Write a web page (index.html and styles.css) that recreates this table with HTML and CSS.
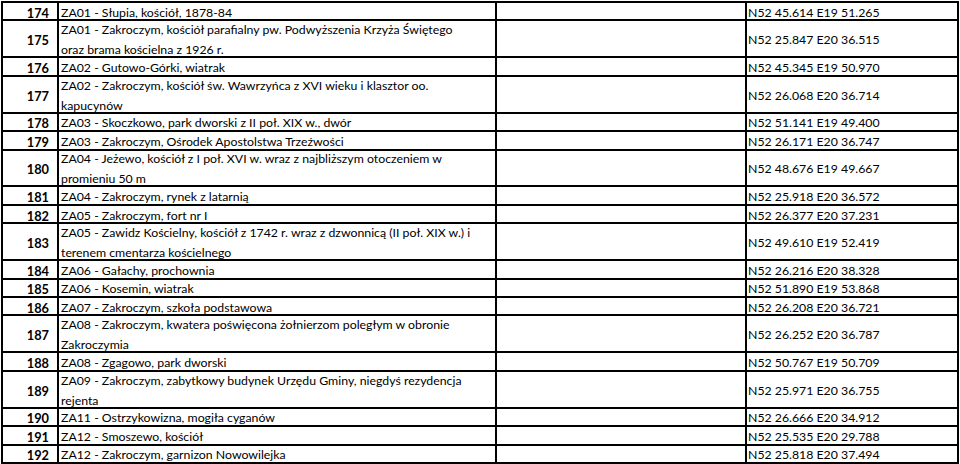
FILE: index.html
```html
<!DOCTYPE html>
<html lang="pl">
<head>
<meta charset="utf-8">
<title>Zabytki</title>
<link rel="stylesheet" href="styles.css">
</head>
<body>
<div class="sheet">
  <div class="row single"><div class="c num">174</div><div class="c name">ZA01 - Słupia, kościół, 1878-84</div><div class="c blank"></div><div class="c coord">N52 45.614 E19 51.265</div></div>
  <div class="row double"><div class="c num">175</div><div class="c name">ZA01 - Zakroczym, kościół parafialny pw. Podwyższenia Krzyża Świętego<br>oraz brama kościelna z 1926 r.</div><div class="c blank"></div><div class="c coord">N52 25.847 E20 36.515</div></div>
  <div class="row single"><div class="c num">176</div><div class="c name">ZA02 - Gutowo-Górki, wiatrak</div><div class="c blank"></div><div class="c coord">N52 45.345 E19 50.970</div></div>
  <div class="row double"><div class="c num">177</div><div class="c name">ZA02 - Zakroczym, kościół św. Wawrzyńca z XVI wieku i klasztor oo.<br>kapucynów</div><div class="c blank"></div><div class="c coord">N52 26.068 E20 36.714</div></div>
  <div class="row single"><div class="c num">178</div><div class="c name">ZA03 - Skoczkowo, park dworski z II poł. XIX w., dwór</div><div class="c blank"></div><div class="c coord">N52 51.141 E19 49.400</div></div>
  <div class="row single"><div class="c num">179</div><div class="c name">ZA03 - Zakroczym, Ośrodek Apostolstwa Trzeźwości</div><div class="c blank"></div><div class="c coord">N52 26.171 E20 36.747</div></div>
  <div class="row double"><div class="c num">180</div><div class="c name">ZA04 - Jeżewo, kościół z I poł. XVI w. wraz z najbliższym otoczeniem w<br>promieniu 50 m</div><div class="c blank"></div><div class="c coord">N52 48.676 E19 49.667</div></div>
  <div class="row single"><div class="c num">181</div><div class="c name">ZA04 - Zakroczym, rynek z latarnią</div><div class="c blank"></div><div class="c coord">N52 25.918 E20 36.572</div></div>
  <div class="row single"><div class="c num">182</div><div class="c name">ZA05 - Zakroczym, fort nr I</div><div class="c blank"></div><div class="c coord">N52 26.377 E20 37.231</div></div>
  <div class="row double"><div class="c num">183</div><div class="c name">ZA05 - Zawidz Kościelny, kościół z 1742 r. wraz z dzwonnicą (II poł. XIX w.) i<br>terenem cmentarza kościelnego</div><div class="c blank"></div><div class="c coord">N52 49.610 E19 52.419</div></div>
  <div class="row single"><div class="c num">184</div><div class="c name">ZA06 - Gałachy, prochownia</div><div class="c blank"></div><div class="c coord">N52 26.216 E20 38.328</div></div>
  <div class="row single"><div class="c num">185</div><div class="c name">ZA06 - Kosemin, wiatrak</div><div class="c blank"></div><div class="c coord">N52 51.890 E19 53.868</div></div>
  <div class="row single"><div class="c num">186</div><div class="c name">ZA07 - Zakroczym, szkoła podstawowa</div><div class="c blank"></div><div class="c coord">N52 26.208 E20 36.721</div></div>
  <div class="row double"><div class="c num">187</div><div class="c name">ZA08 - Zakroczym, kwatera poświęcona żołnierzom poległym w obronie<br>Zakroczymia</div><div class="c blank"></div><div class="c coord">N52 26.252 E20 36.787</div></div>
  <div class="row single"><div class="c num">188</div><div class="c name">ZA08 - Zgagowo, park dworski</div><div class="c blank"></div><div class="c coord">N52 50.767 E19 50.709</div></div>
  <div class="row double"><div class="c num">189</div><div class="c name">ZA09 - Zakroczym, zabytkowy budynek Urzędu Gminy, niegdyś rezydencja<br>rejenta</div><div class="c blank"></div><div class="c coord">N52 25.971 E20 36.755</div></div>
  <div class="row single"><div class="c num">190</div><div class="c name">ZA11 - Ostrzykowizna, mogiła cyganów</div><div class="c blank"></div><div class="c coord">N52 26.666 E20 34.912</div></div>
  <div class="row single"><div class="c num">191</div><div class="c name">ZA12 - Smoszewo, kościół</div><div class="c blank"></div><div class="c coord">N52 25.535 E20 29.788</div></div>
  <div class="row single"><div class="c num">192</div><div class="c name">ZA12 - Zakroczym, garnizon Nowowilejka</div><div class="c blank"></div><div class="c coord">N52 25.818 E20 37.494</div></div>
</div>
</body>
</html>
```

FILE: styles.css
```css
* { box-sizing: border-box; }
html, body { margin: 0; padding: 0; background: #fff; }
body {
  font-family: Lato, "Open Sans", "Liberation Sans", sans-serif;
  font-size: 12.3px;
  color: #000;
}
.sheet {
  margin: 1px 0 0 1px;
  width: 958px;
  border-top: 2px solid #000;
  border-left: 2px solid #000;
}
.row {
  display: grid;
  grid-template-columns: 56px 438px 250px 212px;
}
.single { height: 18.44px; grid-template-rows: 18.44px; }
.double { height: 36.88px; grid-template-rows: 36.88px; }
.c {
  border-right: 2px solid #000;
  border-bottom: 2px solid #000;
  display: flex;
  align-items: center;
  white-space: nowrap;
  padding-top: 3px;
  line-height: 14px;
  min-height: 0;
  overflow: visible;
}
.num {
  justify-content: flex-end;
  padding-right: 8px;
  font-weight: 700;
  font-size: 12.8px;
}
.name {
  padding-left: 2px;
}
.double .name {
  line-height: 20px;
}
.coord {
  padding-left: 1px;
}
```
